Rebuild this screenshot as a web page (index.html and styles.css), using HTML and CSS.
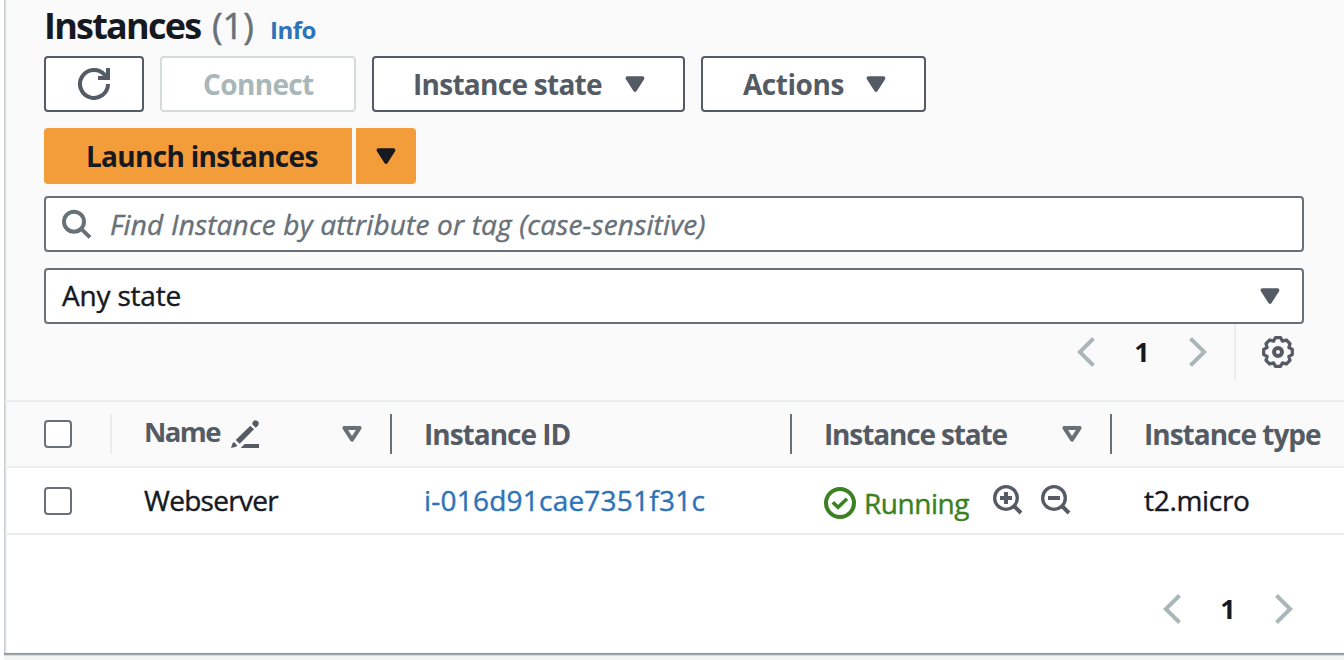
FILE: index.html
```html
<!DOCTYPE html>
<html lang="en">
<head>
<meta charset="utf-8">
<title>Instances</title>
<link rel="stylesheet" href="styles.css">
</head>
<body>
<svg class="defs" width="0" height="0" aria-hidden="true">
  <symbol id="caret" viewBox="0 0 20 16"><path d="M2 2h16l-8 12z" fill="currentColor" stroke="currentColor" stroke-width="4" stroke-linejoin="round" transform="translate(.6 .2) scale(.94 .98)"/></symbol>
  <symbol id="caret-open" viewBox="0 0 20 16"><path d="M2.400 2h15.200L10 13.600z" fill="none" stroke="currentColor" stroke-width="4" stroke-linejoin="round"/></symbol>
  <symbol id="prev" viewBox="0 0 18 30"><path d="M16.500 1.500L2.800 15l13.700 13.500" fill="none" stroke="currentColor" stroke-width="4"/></symbol>
  <symbol id="next" viewBox="0 0 18 30"><path d="M1.500 1.500L15.200 15 1.500 28.500" fill="none" stroke="currentColor" stroke-width="4"/></symbol>
</svg>
<main class="page">
  <section class="panel">
    <header class="head">
      <h1 class="title"><span class="title-text">Instances</span><span class="count">(1)</span><a class="info">Info</a></h1>
      <div class="actions">
        <button class="btn btn-refresh"><svg width="32" height="32" viewBox="0 0 16 16" fill="none" stroke="currentColor" stroke-width="2"><path d="M15 8a7 7 0 1 1-1.700-4.600L14.500 4.800M10 5h5V0"/></svg></button>
        <button class="btn btn-connect"><span class="t-connect">Connect</span></button>
        <button class="btn btn-state"><span class="t-state">Instance state</span><svg width="20" height="16"><use href="#caret"/></svg></button>
        <button class="btn btn-actions"><span class="t-actions">Actions</span><svg width="20" height="16"><use href="#caret"/></svg></button>
      </div>
      <div class="launch">
        <button class="btn-launch"><span class="t-launch">Launch instances</span></button>
        <button class="btn-more"><svg width="20" height="16"><use href="#caret"/></svg></button>
      </div>
      <div class="field search">
        <svg width="30" height="30" viewBox="0 0 90 90" fill="none" stroke="currentColor" stroke-width="12"><circle cx="36" cy="38" r="30"/><path d="M56 58L84 85"/></svg>
        <span class="placeholder">Find Instance by attribute or tag (case-sensitive)</span>
      </div>
      <div class="field select">
        <span class="t-any">Any state</span>
        <svg width="20" height="16"><use href="#caret"/></svg>
      </div>
      <div class="tools">
        <nav class="pager"><svg width="18" height="30"><use href="#prev"/></svg><b>1</b><svg width="18" height="30"><use href="#next"/></svg></nav>
        <div class="settings">
          <svg width="32" height="32" viewBox="-16 -16 32 32" fill="none" stroke="currentColor">
            <path stroke-width="3.300" stroke-linejoin="round" d="M-2.600-14.300H2.600L4.500-10.900L8.300-12L12-8.300L10.900-4.500L14.300-2.600V2.600L10.900 4.500L12 8.300L8.300 12L4.500 10.900L2.600 14.300H-2.600L-4.500 10.900L-8.300 12L-12 8.300L-10.900 4.500L-14.300 2.600V-2.600L-10.900-4.500L-12-8.300L-8.300-12L-4.500-10.900Z"/>
            <circle r="4" stroke-width="4"/>
          </svg>
        </div>
      </div>
    </header>
    <div class="row row-head">
      <div class="cell-check"><span class="check"></span></div>
      <div class="cell cell-name"><span class="t-name">Name</span>
        <svg class="pencil" width="28" height="28" viewBox="0 0 84 84" fill="currentColor"><path d="M0 84L5 69Q8 65 12 69L17 74Q20 78 15 80Z"/><path d="M14 60L58 17L69 28L26 71Z"/><path d="M63 12L67 4Q73-2 80 4Q86 10 81 17L74 23Z"/><path d="M41 72H84V84H29Z"/></svg>
        <svg class="sort" width="20" height="16"><use href="#caret-open"/></svg></div>
      <div class="cell"><span class="t-id">Instance ID</span></div>
      <div class="cell"><span class="t-hstate">Instance state</span><svg class="sort" width="20" height="16"><use href="#caret-open"/></svg></div>
      <div class="cell cell-last"><span class="t-type">Instance type</span></div>
    </div>
    <div class="row row-data">
      <div class="cell-check"><span class="check"></span></div>
      <div class="cell"><span class="t-web">Webserver</span></div>
      <div class="cell"><a class="link">i-016d91cae7351f31c</a></div>
      <div class="cell">
        <span class="status"><svg width="32" height="32" viewBox="0 0 16 16" fill="none" stroke="currentColor" stroke-width="2"><circle cx="8" cy="8" r="7"/><path stroke-width="1.800" d="M4.400 7.600L7 10.100 11.500 5.900"/></svg><span class="t-run">Running</span></span>
        <svg class="zoom-in" width="30" height="30" viewBox="0 0 90 90" fill="none" stroke="currentColor" stroke-width="10"><circle cx="39" cy="39" r="34"/><path d="M63 63L84 84M21 39H57M39 21V57" stroke-width="12"/></svg>
        <svg class="zoom-out" width="30" height="30" viewBox="0 0 90 90" fill="none" stroke="currentColor" stroke-width="10"><circle cx="39" cy="39" r="34"/><path d="M63 63L84 84M21 39H57" stroke-width="12"/></svg>
      </div>
      <div class="cell cell-last"><span class="t-micro">t2.micro</span></div>
    </div>
    <footer class="foot">
      <nav class="pager"><svg width="18" height="30"><use href="#prev"/></svg><b>1</b><svg width="18" height="30"><use href="#next"/></svg></nav>
    </footer>
  </section>
</main>
</body>
</html>
```

FILE: styles.css
```css
* { box-sizing: border-box; }
body {
  margin: 0;
  height: 660px;
  overflow: hidden;
  background: #fff;
  color: #16191f;
  font: 28px/40px "Open Sans", "Noto Sans", sans-serif;
  white-space: nowrap;
}
svg { display: block; flex: none; }
.defs { position: absolute; }
span, b, a { display: block; }
button { font: inherit; margin: 0; padding: 0; }
.page { margin-left: 4px; height: 660px; background: #f2f3f3; }
.panel {
  height: 653px;
  background: #fff;
  border-left: 1px solid #c5cbd0;
  box-shadow: inset 1px 0 #dfe3e5, inset 2px 0 #f1f3f3, 0 1px #879196, 0 2px #a3abaf, 0 3px #d5dadb;
}
.head {
  height: 402px;
  padding: 0 40px 0 39px;
  background: #fafafa;
  border-bottom: 2px solid #eaeded;
  box-shadow: inset 1px 0 #dfe3e5, inset 2px 0 #f1f3f3;
}
.title { display: flex; margin: 0; height: 56px; font-size: 36px; line-height: 52px; align-items: baseline; }
.title-text { width: 167px; letter-spacing: -1.750px; }
.count { width: 59px; padding-left: 1px; color: #687078; font-weight: 400; -webkit-text-stroke: .5px; }
.info { color: #2e73b8; font-size: 24px; letter-spacing: -.5px; }
.actions { display: flex; gap: 16px; color: #545b64; }
.btn {
  display: flex;
  align-items: center;
  height: 56px;
  background: #fff;
  border: 2px solid #545b64;
  border-radius: 4px;
  color: #545b64;
  font-weight: 700;
}
.btn-refresh { width: 100px; justify-content: center; }
.btn-connect { width: 196px; padding-left: 41px; border-color: #d5dbdb; color: #aab7b8; }
.btn-state { width: 313px; padding: 0 38px 0 39px; justify-content: space-between; }
.btn-actions { width: 225px; padding: 0 38px 0 40px; justify-content: space-between; }
.t-connect { letter-spacing: -.650px; }
.t-state { letter-spacing: -.720px; }
.t-actions { letter-spacing: -.450px; }
.t-launch { letter-spacing: -.700px; }
.launch { display: flex; gap: 4px; margin-top: 16px; font-weight: 700; }
.btn-launch, .btn-more {
  display: flex;
  align-items: center;
  height: 56px;
  border: 0;
  background: #f39c3a;
  color: #16191f;
}
.btn-launch { width: 308px; padding-left: 42px; border-radius: 4px 0 0 4px; }
.btn-more { width: 60px; justify-content: center; border-radius: 0 4px 4px 0; }
.field {
  display: flex;
  align-items: center;
  height: 56px;
  background: #fff;
  border: 2px solid #687078;
  border-radius: 4px;
}
.search { margin-top: 12px; padding-left: 16px; gap: 18px; color: #687078; }
.placeholder { font-style: italic; letter-spacing: .170px; -webkit-text-stroke: .4px; }
.t-any, .t-web, .link, .t-run, .t-micro { -webkit-text-stroke: .4px; }
.select { margin-top: 16px; padding: 0 22px 0 16px; justify-content: space-between; }
.t-any { margin-top: -2px; letter-spacing: -.200px; }
.select svg { color: #545b64; }
.tools { display: flex; justify-content: flex-end; }
.pager { display: flex; align-items: center; justify-content: space-between; width: 130px; color: #aab7b8; }
.pager b { color: #16191f; font-size: 27px; }
.settings {
  display: flex;
  align-items: center;
  justify-content: flex-end;
  width: 70px;
  height: 56px;
  margin-left: 27px;
  padding-right: 10px;
  border-left: 2px solid #eaeded;
  color: #545b64;
}
.row {
  display: grid;
  grid-template-columns: 107px 280px 400px 320px 1fr;
  border-bottom: 2px solid #eaeded;
  box-shadow: inset 1px 0 #dfe3e5, inset 2px 0 #f1f3f3;
}
.row-head { height: 66px; background: #fafafa; color: #545b64; font-weight: 700; }
.row-data { height: 67px; }
.cell-check { display: flex; align-items: center; padding-left: 39px; }
.check { width: 28px; height: 28px; background: #fff; border: 2px solid #687078; border-radius: 4px; }
.cell { display: flex; align-items: center; padding-left: 32px; }
.row-head .cell { height: 40px; margin-top: 12px; border-right: 2px solid #687078; }
.row-head .cell-check { height: 64px; background: linear-gradient(#eaeded, #eaeded) 105px 12px / 2px 40px no-repeat; }
.row-head .cell-last { border-right: 0; }
.sort { margin-left: auto; margin-right: 28px; color: #687078; }
.t-name { width: 76px; margin-top: -4px; font-size: 27.500px; letter-spacing: -1.600px; }
.t-id { letter-spacing: -1px; }
.t-hstate { letter-spacing: -1.150px; }
.t-type { letter-spacing: -1px; }
.t-web { margin-top: -2px; letter-spacing: -.700px; }
.t-micro { margin-top: -1px; letter-spacing: -.300px; }
.t-run { letter-spacing: -.450px; }
.pencil { margin-left: 11px; }
.link { color: #2e73b8; letter-spacing: .220px; margin-top: -1px; }
.status { display: flex; align-items: center; gap: 8px; width: 169px; margin-top: 4px; color: #3b8021; }
.zoom-in, .zoom-out { margin-top: -2px; color: #545b64; }
.zoom-out { margin-left: 18px; }
.foot { display: flex; justify-content: flex-end; height: 118px; padding: 30px 51px 0 0; }
.foot .pager { height: 88px; }
```
